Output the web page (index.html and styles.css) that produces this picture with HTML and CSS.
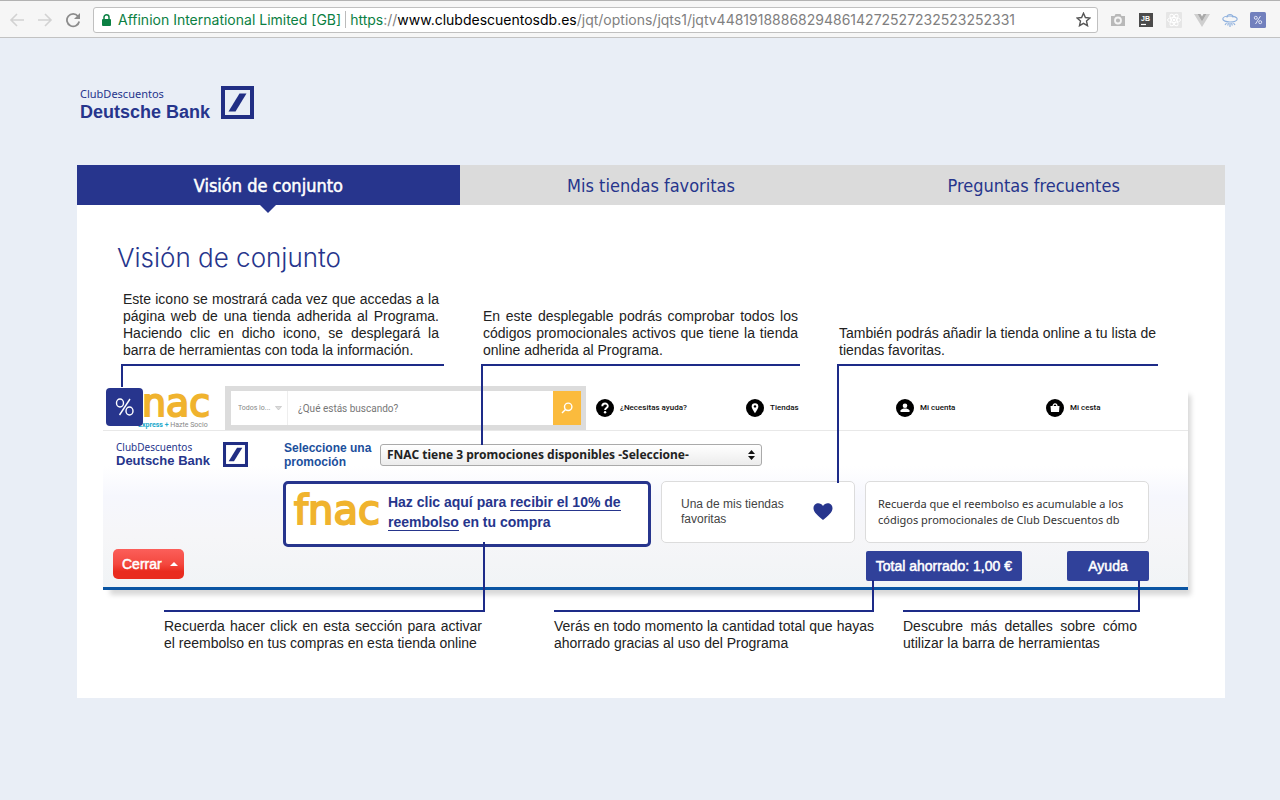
FILE: index.html
```html
<!DOCTYPE html>
<html lang="es">
<head>
<meta charset="utf-8">
<meta name="viewport" content="width=device-width, initial-scale=1">
<title>ClubDescuentos Deutsche Bank</title>
<link rel="stylesheet" href="styles.css">
</head>
<body>
<header class="browser">
  <div class="nav">
    <button class="icon-btn" aria-label="Atrás"><svg width="16" height="14" viewBox="0 0 16 14" fill="none" stroke="#d2d2d2" stroke-width="1.600"><path d="M15 7H2M8 1L2 7l6 6"/></svg></button>
    <button class="icon-btn" aria-label="Adelante"><svg width="16" height="14" viewBox="0 0 16 14" fill="none" stroke="#d2d2d2" stroke-width="1.600"><path d="M1 7h13M8 1l6 6-6 6"/></svg></button>
    <button class="icon-btn" aria-label="Recargar"><svg width="16" height="16" viewBox="0 0 16 16"><path d="M13 4.300A6.200 6.200 0 1 0 14.200 9.500" fill="none" stroke="#8c8c8c" stroke-width="1.800"/><path d="M15 1v6H9z" fill="#8c8c8c"/></svg></button>
  </div>
  <div class="address">
    <svg class="lock" width="9" height="12" viewBox="0 0 9 12"><rect y="5" width="9" height="7" rx="1" fill="#0b8043"/><path d="M2 5.500V3.300a2.500 2.500 0 0 1 5 0v2.200" fill="none" stroke="#0b8043" stroke-width="1.500"/></svg>
    <span class="owner">Affinion International Limited [GB]</span>
    <span class="url"><span class="scheme">https</span>://<span class="host">www.clubdescuentosdb.es</span>/jqt/options/jqts1/jqtv448191888682948614272527232523252331</span>
    <button class="icon-btn star" aria-label="Añadir a marcadores"><svg width="15" height="15" viewBox="0 0 15 15"><path d="M7.500 1.200l1.900 4.300 4.600.5-3.500 3.100 1 4.600-4-2.400-4 2.400 1-4.600L1 6l4.600-.5z" fill="none" stroke="#555" stroke-width="1.400"/></svg></button>
  </div>
  <div class="extensions">
    <svg width="16" height="16" viewBox="0 0 16 16"><path d="M1 4h3.500l1-2h5l1 2H15v10H1z" fill="#b9b9b9"/><circle cx="8" cy="8.500" r="3" fill="none" stroke="#f5f5f5" stroke-width="1.800"/></svg>
    <svg width="16" height="16" viewBox="0 0 16 16"><rect x="1" y="1" width="14" height="14" fill="#4b4b4b"/><path d="M3 12.500h5" stroke="#fff" stroke-width="1.200"/><text x="3" y="9" class="jb">JB</text></svg>
    <svg width="16" height="16" viewBox="0 0 16 16"><rect width="16" height="16" rx="1" fill="#e6e6e6"/><g fill="none" stroke="#fff"><ellipse cx="8" cy="8" rx="6.500" ry="2.500"/><ellipse cx="8" cy="8" rx="6.500" ry="2.500" transform="rotate(60 8 8)"/><ellipse cx="8" cy="8" rx="6.500" ry="2.500" transform="rotate(120 8 8)"/></g><circle cx="8" cy="8" r="1.300" fill="#fff"/></svg>
    <svg width="16" height="16" viewBox="0 0 16 16"><path d="M0 2h3.500L8 9.500 12.500 2H16L8 15z" fill="#cfcfcf"/><path d="M3.500 2h3L8 4.500 9.500 2h3L8 9.500z" fill="#a9a9a9"/></svg>
    <svg width="16" height="16" viewBox="0 0 16 16" fill="none" stroke="#8fb1de" stroke-width="1.200"><ellipse cx="8" cy="7" rx="7.200" ry="3"/><path d="M5 5.500C5 1.500 11 1.500 11 5.500M4.500 11l-1.500 2M8 11v4M11.500 11l1.500 2M6.300 11l-.5 2.500M9.700 11l.5 2.500"/></svg>
    <svg width="16" height="16" viewBox="0 0 16 16"><rect width="16" height="16" rx="1.500" fill="#7280bd"/><g fill="none" stroke="#e2e6f6"><circle cx="5.800" cy="5.800" r="1.500"/><circle cx="10.200" cy="10.200" r="1.500"/><path d="M10.500 4l-5 8"/></g></svg>
  </div>
</header>

<main class="page">
  <div class="brand">
    <div class="brand-text"><span class="club">ClubDescuentos</span><strong class="bank">Deutsche Bank</strong></div>
    <svg class="brand-mark" viewBox="0 0 33 33"><rect x="2" y="2" width="29" height="29" fill="none" stroke="#212e84" stroke-width="4"/><path d="M18.500 7.500H25.500L14.500 25.500H7.500z" fill="#212e84"/></svg>
  </div>

  <nav class="tabs">
    <a class="tab active" href="#vision">Visión de conjunto</a>
    <a class="tab" href="#tiendas">Mis tiendas favoritas</a>
    <a class="tab" href="#preguntas">Preguntas frecuentes</a>
  </nav>

  <section class="panel" id="vision">
    <h1 class="title">Visión de conjunto</h1>

    <div class="notes notes-top">
      <p class="note to-icon">Este icono se mostrará cada vez que accedas a la página web de una tienda adherida al Programa. Haciendo clic en dicho icono, se desplegará la barra de herramientas con toda la información.</p>
      <p class="note to-select">En este desplegable podrás comprobar todos los códigos promocionales activos que tiene la tienda online adherida al Programa.</p>
      <p class="note to-favourite">También podrás añadir la tienda online a tu lista de tiendas favoritas.</p>
    </div>

    <div class="demo">
      <div class="shop">
        <div class="shop-logo">
          <span class="fnac fnac-shop">nac</span>
          <span class="shop-sub"><b>Express +</b> Hazte Socio</span>
          <svg class="badge" width="37" height="38" viewBox="0 0 37 38"><rect width="37" height="38" rx="4" fill="#27358d"/><g fill="none" stroke="#fff" stroke-width="1.400"><ellipse cx="14" cy="15" rx="3.500" ry="4"/><ellipse cx="23.500" cy="23" rx="3.500" ry="4"/><path d="M24 11L13.500 27"/></g></svg>
        </div>
        <form class="search">
          <div class="category-wrap"><select class="category" aria-label="Categoría"><option>Todos lo...</option></select>
          <svg class="chevron" width="7" height="5" viewBox="0 0 7 5"><path d="M.500.500h6L3.500 4z" fill="#ddd" stroke="#bbb" stroke-width=".6"/></svg></div>
          <input class="query" type="text" aria-label="Buscar" placeholder="¿Qué estás buscando?">
          <button class="search-btn" type="button" aria-label="Buscar"><svg width="12" height="12" viewBox="0 0 12 12" fill="none" stroke="#fff" stroke-width="1.400"><circle cx="7.200" cy="4.800" r="3.700"/><path d="M4.500 7.500L1 11"/></svg></button>
        </form>
        <nav class="shop-links">
          <a href="#ayuda"><svg width="18" height="18" viewBox="0 0 18 18"><circle cx="9" cy="9" r="9"/><path d="M6.300 7.200C6.300 3.600 11.800 3.700 11.800 7c0 2-2.700 2-2.700 4" fill="none" stroke="#fff" stroke-width="1.900"/><circle cx="9.100" cy="13.300" r="1.200" fill="#fff"/></svg>¿Necesitas ayuda?</a>
          <a href="#mapa"><svg width="18" height="18" viewBox="0 0 18 18"><circle cx="9" cy="9" r="9"/><path d="M9 14.200C6.500 10.500 5.700 9 5.700 7.500a3.300 3.300 0 0 1 6.600 0C12.300 9 11.500 10.500 9 14.200z" fill="#fff"/><circle cx="9" cy="7.400" r="1.200"/></svg>Tiendas</a>
          <a href="#cuenta"><svg width="18" height="18" viewBox="0 0 18 18"><circle cx="9" cy="9" r="9"/><circle cx="9" cy="6.800" r="2.300" fill="#fff"/><path d="M4.500 13v-1.500c1-1.600 2.500-2 4.500-2s3.500.4 4.500 2V13z" fill="#fff"/></svg>Mi cuenta</a>
          <a href="#cesta"><svg width="18" height="18" viewBox="0 0 18 18"><circle cx="9" cy="9" r="9"/><path d="M4.500 7h9l-.5 6H5z" fill="#fff"/><path d="M7 7.500C7 4 11 4 11 7.500" fill="none" stroke="#fff" stroke-width="1.200"/></svg>Mi cesta</a>
        </nav>
      </div>

      <div class="toolbar">
        <div class="side">
          <div class="brand brand-small">
            <div class="brand-text"><span class="club">ClubDescuentos</span><strong class="bank">Deutsche Bank</strong></div>
            <svg class="brand-mark" viewBox="0 0 33 33"><rect x="2" y="2" width="29" height="29" fill="none" stroke="#212e84" stroke-width="4"/><path d="M18.500 7.500H25.500L14.500 25.500H7.500z" fill="#212e84"/></svg>
          </div>
          <button class="close" type="button">Cerrar<svg width="8" height="4" viewBox="0 0 8 4"><path d="M0 4l4-4 4 4z" fill="#fff"/></svg></button>
        </div>
        <div class="tools">
          <div class="promo-row">
            <label class="promo-label" for="promo">Seleccione una promoción</label>
            <div class="promo-wrap">
              <select class="promo-select" id="promo"><option>FNAC tiene 3 promociones disponibles -Seleccione-</option></select>
              <svg class="arrows" width="7" height="10" viewBox="0 0 7 10"><path d="M0 4l3.500-4L7 4zM0 6l3.500 4L7 6z" fill="#111"/></svg>
            </div>
          </div>
          <div class="cards">
            <div class="card offer"><span class="fnac">fnac</span><p class="offer-text">Haz clic aquí para <a href="#reembolso">recibir el 10% de reembolso</a> en tu compra</p></div>
            <div class="card favourite"><p class="favourite-text">Una de mis tiendas favoritas</p><svg width="20" height="17" viewBox="0 0 20 17"><path d="M10 17C5 12.500.500 9.500.500 5.200.500-.500 7.500-1.500 10 3c2.500-4.500 9.500-3.500 9.500 2.200C19.500 9.500 15 12.500 10 17z" fill="#27358d"/></svg></div>
            <div class="card reminder"><p class="reminder-text">Recuerda que el reembolso es acumulable a los códigos promocionales de Club Descuentos db</p></div>
          </div>
          <div class="actions">
            <button class="action" type="button">Total ahorrado: 1,00 €</button>
            <button class="action help" type="button">Ayuda</button>
          </div>
        </div>
      </div>
    </div>

    <div class="notes notes-bottom">
      <p class="note to-offer">Recuerda hacer click en esta sección para activar el reembolso en tus compras en esta tienda online</p>
      <p class="note to-total">Verás en todo momento la cantidad total que hayas ahorrado gracias al uso del Programa</p>
      <p class="note to-help">Descubre más detalles sobre cómo utilizar la barra de herramientas</p>
    </div>
  </section>
</main>
</body>
</html>
```
FILE: styles.css
```css
* { box-sizing: border-box; }
body {
  margin: 0;
  min-height: 100vh;
  background: #e9eef6;
  font-family: "Liberation Sans", Arial, sans-serif;
  font-size: 14px;
  color: #222;
}
p, h1 { margin: 0; }
a { color: inherit; text-decoration: none; }
button, select, input { font: inherit; margin: 0; }
svg { display: block; flex: none; }

.browser {
  display: flex;
  align-items: center;
  height: 38px;
  padding: 1px 14px 0 9px;
  background: #f6f6f6;
  border-top: 1px solid #b2b2b2;
  border-bottom: 1px solid #c2c2c2;
  font-family: Inter, sans-serif;
}
.nav { display: flex; gap: 12px; padding-right: 12px; }
.icon-btn { display: flex; align-items: center; padding: 0; border: 0; background: none; }
.address {
  flex: 1;
  display: flex;
  align-items: center;
  min-width: 0;
  height: 26px;
  padding: 0 6px 0 8px;
  background: #fff;
  border: 1px solid #c0c0c0;
  border-radius: 3px;
}
.owner { margin-left: 7px; padding-right: 4px; border-right: 1px solid #bbb; color: #0b8043; white-space: nowrap; }
.url { flex: 1; margin-left: 4px; color: #808080; white-space: nowrap; overflow: hidden; }
.scheme { color: #0b8043; }
.host { color: #000; }
.extensions { display: flex; gap: 12px; padding-left: 12px; }
.jb { font: bold 7px "Liberation Sans", sans-serif; fill: #fff; }

.page { padding: 48px 55px 40px 77px; }
.brand { display: flex; align-items: flex-start; gap: 11px; padding-left: 3px; color: #26358c; }
.brand-text { display: flex; flex-direction: column; }
.club { font: 11px/15px "Noto Sans", sans-serif; }
.bank { font-size: 18px; line-height: 22px; }
.brand-mark { width: 33px; height: 33px; }

.tabs { display: grid; grid-template-columns: repeat(3, 1fr); margin-top: 42px; background: #dbdbdb; }
.tab {
  position: relative;
  padding: 9px 0 7px;
  font: 18px/24px "DejaVu Sans Condensed", "Noto Sans", sans-serif;
  text-align: center;
  color: #26358c;
}
.tab.active { background: #27358d; color: #fff; -webkit-text-stroke: 0.5px #fff; }
.tab.active::after {
  content: "";
  position: absolute;
  top: 100%;
  left: 50%;
  border: 8px solid transparent;
  border-top-color: #27358d;
  border-bottom: 0;
  transform: translateX(-50%);
}

.panel { padding: 36px 37px 46px 26px; background: #fff; }
.title {
  padding-left: 14px;
  margin-bottom: 16px;
  font: 300 26px/34px Inter, sans-serif;
  color: #26358c;
}

.notes { display: grid; }
.notes-top { grid-template-columns: 323fr 319fr 321fr; gap: 37px; align-items: end; padding: 0 30px 0 18px; }
.notes-bottom { grid-template-columns: 321fr 69fr 320fr 29fr 237fr; padding: 0 48px 0 61px; }
.note { position: relative; line-height: 17px; text-align: justify; }
.notes-top .note { padding: 0 2px 5px; border-bottom: 2px solid #1d2b88; }
.notes-top .to-icon { padding-right: 5px; }
.notes-bottom .note { padding: 6px 3px 0 0; border-top: 2px solid #1d2b88; }
.notes-bottom .to-total { grid-column: 3; padding-right: 0; }
.to-help { grid-column: 5; }
.note::after { content: ""; position: absolute; width: 2px; background: #1d2b88; z-index: 2; }
.notes-top .note::after { top: 100%; left: 0; }
.notes-bottom .note::after { bottom: 100%; right: 0; }
.to-icon::after { height: 23px; }
.to-select::after { height: 81px; }
.to-favourite::after { height: 119px; }
.to-offer::after { height: 70px; }
.to-total::after, .to-help::after { height: 32px; }

.demo {
  margin: 20px 0;
  border-bottom: 3px solid #0a55a3;
  box-shadow: 5px 7px 5px -2px #d8d8d8;
  background: linear-gradient(#fff 0, #fff 80px, #f6f7fd 110px, #f6f6f8 150px, #f1f4f6 200px);
}
.shop {
  display: grid;
  grid-template-columns: 122fr 361fr 602fr;
  height: 45px;
  background: #fff;
  border-bottom: 1px solid #e8e8e8;
}
.fnac { font: 40px/40px "DejaVu Sans", sans-serif; color: #f0b32e; -webkit-text-stroke: 2px #f0b32e; }
.shop-logo { position: relative; padding-left: 39px; }
.fnac-shop { display: block; font-size: 38px; line-height: 35px; }
.shop-sub { display: block; margin-left: -4px; font: 7px/8px Roboto, sans-serif; color: #888; white-space: nowrap; }
.shop-sub b { color: #1aa9cc; }
.badge { position: absolute; left: 3px; top: 2px; }
.search { display: flex; border: 6px solid #dcdcdc; border-width: 5px 5px 5px 6px; font-family: Roboto, sans-serif; color: #888; }
.category-wrap { display: flex; align-items: center; width: 57px; padding-left: 7px; border-right: 1px solid #eee; }
.category { appearance: none; width: 37px; padding: 0; border: 0; background: none; font-size: 7px; color: #888; }
.query { flex: 1; min-width: 0; padding: 0 10px; border: 0; background: none; font-size: 10px; }
.query::placeholder { color: #777; }
.search-btn { display: flex; align-items: center; justify-content: center; width: 28px; padding: 0; border: 0; background: #fbbb3d; }
.shop-links { display: grid; grid-template-columns: 150fr 150fr 150fr 142fr; align-items: center; padding-left: 10px; font: 500 8px/10px Roboto, sans-serif; color: #111; }
.shop-links a { display: flex; align-items: center; gap: 6px; }

.toolbar { display: grid; grid-template-columns: 170fr 866fr; padding: 10px 39px 6px 10px; }
.side { display: flex; flex-direction: column; justify-content: space-between; align-items: flex-start; padding-bottom: 2px; }
.brand-small { gap: 13px; padding-left: 3px; }
.brand-small .club { font-size: 10px; line-height: 12px; }
.brand-small .bank { font-size: 13px; line-height: 16px; }
.brand-small .brand-mark { width: 25px; height: 25px; margin-top: 1px; }
.close {
  display: flex;
  align-items: center;
  gap: 8px;
  height: 30px;
  padding: 0 6px 0 9px;
  border: 0;
  border-radius: 5px;
  background: linear-gradient(#fb5f5a 0, #f4483f 50%, #e92c1f 75%, #e92c1f 100%);
}
.close, .action { color: #fff; -webkit-text-stroke: 0.5px #fff; }
.promo-row { display: flex; align-items: center; gap: 6px; padding-left: 1px; }
.promo-label { width: 90px; font: bold 12px/14px "Liberation Sans", sans-serif; color: #1c4f9c; }
.promo-wrap { position: relative; width: 382px; }
.promo-select {
  display: block;
  appearance: none;
  width: 100%;
  height: 22px;
  padding: 0 6px;
  border: 1px solid #aaa;
  border-radius: 3px;
  background: linear-gradient(#fff, #ececec);
  font: bold 12px/18px "Noto Sans", sans-serif;
  color: #222;
}
.arrows { position: absolute; right: 7px; top: 6px; }
.cards { display: grid; grid-template-columns: 368fr 194fr 284fr; gap: 10px; align-items: start; margin-top: 12px; }
.card { display: flex; height: 62px; background: #fff; border: 1px solid #dcdcdc; border-radius: 5px; }
.offer { height: 66px; gap: 8px; padding: 6px 8px; border: 3px solid #27358d; }
.offer-text { padding-top: 2px; font-weight: bold; line-height: 20px; color: #26358c; }
.offer-text a { border-bottom: 1px solid #26358c; }
.favourite { align-items: center; justify-content: space-between; padding: 0 21px 1px 19px; }
.favourite-text { width: 110px; font: 12px/15px "Liberation Sans", sans-serif; color: #444; }
.reminder { padding: 14px 12px; }
.reminder-text { font: 11px/16px "Noto Sans", sans-serif; color: #333; }
.actions { display: flex; justify-content: flex-end; gap: 45px; margin-top: 4px; }
.action { height: 30px; padding: 0 10px; border: 0; border-radius: 2px; background: #30419a; }
.help { width: 82px; }
```
